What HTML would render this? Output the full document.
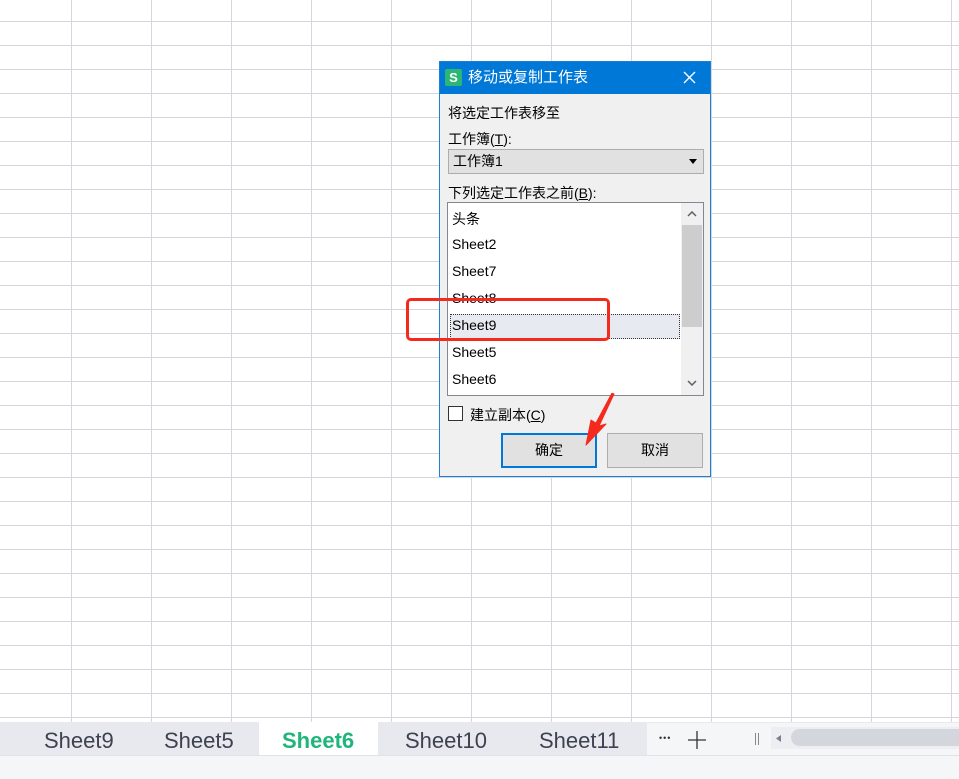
<!DOCTYPE html>
<html><head><meta charset="utf-8">
<style>
*{margin:0;padding:0;box-sizing:border-box}
body{width:959px;height:779px;overflow:hidden;position:relative;background:#fff;font-family:"Liberation Sans","Microsoft YaHei","Noto Sans CJK SC",sans-serif;}
.grid{position:absolute;left:0;top:0;width:959px;height:722px;
background-image:linear-gradient(to right,#d4d6db 1px,transparent 1px),linear-gradient(to bottom,#d4d6db 1px,transparent 1px);
background-size:80px 24px,80px 24px;background-position:71px 0,0 21px;}
.tabs{position:absolute;left:0;top:722px;width:959px;height:33px;background:#e8e9ee;}
.tab{position:absolute;top:0;height:33px;line-height:37px;font-size:22px;color:#3d4250;}
.bottom{position:absolute;left:0;top:755px;width:959px;height:24px;background:#f5f6f8;border-top:1px solid #e0e2e6}
.dlg{position:absolute;left:439px;top:61px;width:272px;height:416px;background:#f0f0f0;border:1px solid #1a7fd6;}
.title{height:32px;background:#0078d7;color:#fff;font-size:15px;line-height:31px;padding-left:28px;position:relative}
.lbl{position:absolute;font-size:14px;color:#000;}
.item{position:absolute;left:12px;font-size:14px;}
</style></head><body>
<div class="grid"></div>

<div class="dlg">
 <div class="title">
  <div style="position:absolute;left:5px;top:7px;width:17px;height:17px;background:#2bb673;border-radius:2px;color:#fff;font-size:13px;line-height:17px;text-align:center;font-weight:bold">S</div>
  移动或复制工作表
  <svg style="position:absolute;right:14px;top:9px" width="13" height="13" viewBox="0 0 13 13"><path d="M1 1L12 12M12 1L1 12" stroke="#fff" stroke-width="1.4"/></svg>
 </div>
 <div class="lbl" style="left:8px;top:41px">将选定工作表移至</div>
 <div class="lbl" style="left:8px;top:67px">工作簿(<u>T</u>):</div>
 <div style="position:absolute;left:8px;top:87px;width:256px;height:25px;background:#e1e1e1;border:1px solid #adadad;font-size:14px;line-height:23px;padding-left:4px">工作簿1
  <svg style="position:absolute;right:6px;top:9px" width="8" height="5"><path d="M0 0H8L4 5Z" fill="#000"/></svg></div>
 <div class="lbl" style="left:8px;top:121px">下列选定工作表之前(<u>B</u>):</div>
 <div style="position:absolute;left:7px;top:140px;width:257px;height:194px;background:#fff;border:1px solid #828790;overflow:hidden">
  <div style="position:absolute;left:233px;top:0;width:22px;height:192px;background:#f0f0f0"></div>
  <div style="position:absolute;left:234px;top:22px;width:20px;height:102px;background:#cdcdcd"></div>
  <svg style="position:absolute;left:239px;top:8px" width="10" height="6"><path d="M1 5L5 1L9 5" stroke="#606060" stroke-width="1.5" fill="none"/></svg>
  <svg style="position:absolute;left:239px;top:177px" width="10" height="6"><path d="M1 1L5 5L9 1" stroke="#606060" stroke-width="1.5" fill="none"/></svg>
  <div style="position:absolute;left:2px;top:111px;width:230px;height:25px;background:#e7eaf0;border:1px dotted #333"></div>
  <div class="item" style="top:6px;left:4px">头条</div>
  <div class="item" style="top:33px;left:4px">Sheet2</div>
  <div class="item" style="top:60px;left:4px">Sheet7</div>
  <div class="item" style="top:87px;left:4px">Sheet8</div>
  <div class="item" style="top:114px;left:4px">Sheet9</div>
  <div class="item" style="top:141px;left:4px">Sheet5</div>
  <div class="item" style="top:168px;left:4px">Sheet6</div>
 </div>
 <div style="position:absolute;left:8px;top:344px;width:15px;height:15px;background:#fff;border:1px solid #333"></div>
 <div class="lbl" style="left:30px;top:343px">建立副本(<u>C</u>)</div>
 <div style="position:absolute;left:61px;top:371px;width:96px;height:35px;background:#e1e1e1;border:2px solid #0078d7;font-size:14px;text-align:center;line-height:31px">确定</div>
 <div style="position:absolute;left:167px;top:371px;width:96px;height:35px;background:#e1e1e1;border:1px solid #adadad;font-size:14px;text-align:center;line-height:33px">取消</div>
</div>

<div style="position:absolute;left:406px;top:298px;width:204px;height:43px;border:3px solid #f52a1e;border-radius:5px"></div>
<svg style="position:absolute;left:580px;top:393px" width="40" height="60"><path d="M34 1L19 33L26 31L6 52L11 27L16 30L32 0Z" fill="#f52a1e" stroke="#f52a1e" stroke-width="1" stroke-linejoin="round"/></svg>

<div class="tabs">
 <div class="tab" style="left:44px">Sheet9</div>
 <div class="tab" style="left:164px">Sheet5</div>
 <div style="position:absolute;left:259px;top:0;width:119px;height:33px;background:#fff"></div>
 <div class="tab" style="left:282px;color:#1fb57b;font-weight:bold">Sheet6</div>
 <div class="tab" style="left:405px">Sheet10</div>
 <div class="tab" style="left:539px">Sheet11</div>
 <div style="position:absolute;left:647px;top:1px;width:312px;height:32px;background:#f5f6f8"></div>
 <div style="position:absolute;left:659px;top:11px;font-size:9px;letter-spacing:1px;color:#333">•••</div>
 <svg style="position:absolute;left:688px;top:9px" width="18" height="18"><path d="M9 0V18M0 9H18" stroke="#333" stroke-width="1.3"/></svg>
 <div style="position:absolute;left:755px;top:11px;width:1px;height:12px;background:#888"></div>
 <div style="position:absolute;left:758px;top:11px;width:1px;height:12px;background:#888"></div>
 <div style="position:absolute;left:771px;top:5px;width:188px;height:22px;background:#eceef2"></div>
 <svg style="position:absolute;left:776px;top:13px" width="5" height="7"><path d="M5 0V7L0 3.5Z" fill="#7a8090"/></svg>
 <div style="position:absolute;left:791px;top:7px;width:180px;height:17px;background:#d4d6dd;border-radius:9px"></div>
</div>
<div class="bottom"></div>
</body></html>
